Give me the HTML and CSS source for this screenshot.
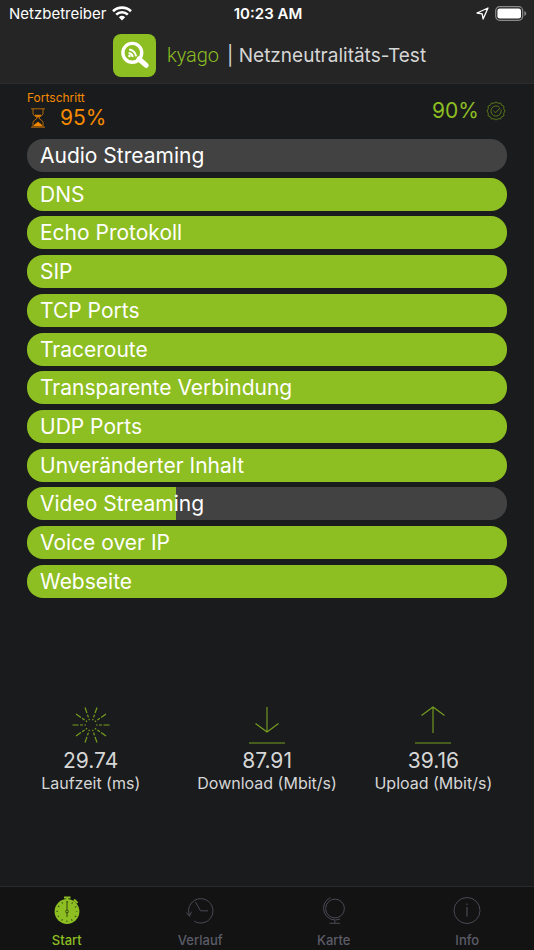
FILE: index.html
```html
<!DOCTYPE html>
<html lang="de">
  <head>
    <meta charset="UTF-8" />
    <meta name="viewport" content="width=device-width, initial-scale=1.0" />
    <title>kyago | Netzneutralitäts-Test</title>
    <link rel="stylesheet" href="styles.css">
  </head>
  <body>
    <header class="header">
      <div class="status-bar">
        <div class="carrier">
          <span>Netzbetreiber</span>
          <svg width="20" height="15" viewBox="0 0 20 15" fill="none" stroke="#fff" stroke-width="2.6">
            <path d="M1 5.2a13 13 0 0 1 18 0" />
            <path d="M4.2 8.6a8.4 8.4 0 0 1 11.6 0" />
            <path d="M10 14.6l-3.1-3.3a4.5 4.5 0 0 1 6.2 0z" fill="#fff" stroke="none" />
          </svg>
        </div>
        <div class="clock">10:23 AM</div>
        <div class="indicators">
          <svg width="13" height="13" viewBox="0 0 13 13" fill="none" stroke="#fff" stroke-width="1.3" stroke-linejoin="round">
            <path d="M12 1L1 6l5.2.8.9 5.2z" />
          </svg>
          <svg width="32" height="15" viewBox="0 0 32 15">
            <rect x=".7" y=".7" width="27" height="13.6" rx="4" fill="none" stroke="#8a8a8a" stroke-width="1.2" />
            <rect x="2.4" y="2.4" width="23.6" height="10.2" rx="2.4" fill="#fff" />
            <path d="M29.4 5v5q1.8-.8 1.8-2.5T29.4 5z" fill="#8a8a8a" />
          </svg>
        </div>
      </div>
      <div class="title-bar">
        <svg class="logo" width="43" height="43" viewBox="0 0 43 43">
          <rect width="43" height="43" rx="8" fill="#8dbe22" />
          <path d="M26 25l7.2 6.3" stroke="#fff" stroke-width="5" stroke-linecap="round" />
          <circle cx="19.3" cy="18.8" r="9.4" fill="none" stroke="#fff" stroke-width="3.4" />
          <g fill="none" stroke="#fff" stroke-width="2">
            <path d="M15.6 19a4.8 4.8 0 0 1 4.2 4" />
            <path d="M16.2 15.4a8 8 0 0 1 6.9 7" />
          </g>
          <circle cx="16.4" cy="22" r="1.3" fill="#fff" />
        </svg>
        <span class="brand">kyago</span>
        <h1 class="title">| Netzneutralitäts-Test</h1>
      </div>
    </header>

    <main class="content">
      <div class="summary">
        <div class="progress">
          <div class="progress-label">Fortschritt</div>
          <div class="progress-value">
            <svg width="16" height="20" viewBox="0 0 16 20" fill="none" stroke="#f58a00" stroke-width=".7">
              <path d="M1 .8h14M1 19.2h14" />
              <path d="M3 1v4.5c0 2.3 4 3 4 4.5s-4 2.2-4 4.5V19M13 1v4.5c0 2.3-4 3-4 4.5s4 2.2 4 4.5V19" />
              <path d="M5 7.2h6L8.5 9h-1z" fill="#f58a00" />
              <path d="M4 18q.5-2 2.3-2.6L8 14l1.7 1.4Q11.5 16 12 18z" fill="#f58a00" />
            </svg>
            <span>95%</span>
          </div>
        </div>
        <div class="score">
          <span>90%</span>
          <svg width="20" height="20" viewBox="0 0 20 20" fill="none" stroke="#587719">
            <path d="M10 1l2.1 1.3 2.4-.3 1.1 2.2 2.3 1-.2 2.4L19 10l-1.3 2.4.2 2.4-2.3 1-1.1 2.2-2.4-.3L10 19l-2.1-1.3-2.4.3-1.1-2.2-2.3-1 .2-2.4L1 10l1.3-2.4-.2-2.4 2.3-1L5.500 2l2.400.3z" />
            <path d="M13.400 6.200a5.100 5.100 0 1 0 1.500 2.300" />
            <path d="M7.500 9.800l2 2 4.500-4.800" />
          </svg>
        </div>
      </div>

      <ul class="tests">
        <li class="test">Audio Streaming</li>
        <li class="test done">DNS</li>
        <li class="test done">Echo Protokoll</li>
        <li class="test done">SIP</li>
        <li class="test done">TCP Ports</li>
        <li class="test done">Traceroute</li>
        <li class="test done">Transparente Verbindung</li>
        <li class="test done">UDP Ports</li>
        <li class="test done">Unveränderter Inhalt</li>
        <li class="test running" style="--progress: 31%">Video Streaming</li>
        <li class="test done">Voice over IP</li>
        <li class="test done">Webseite</li>
      </ul>

      <div class="results">
        <div class="result">
          <svg width="38" height="38" viewBox="0 0 38 38" stroke="#77a01f" stroke-width="1.2" stroke-dasharray="6 1.5 3 1.5 1.5 1.5">
            <path d="M.5 19h14M37.5 19h-14M4 8l11.5 8M34 8l-11.5 8M4 30l11.5-8M34 30l-11.5-8M13 1.500l4.500 13M25 1.500l-4.500 13M13 36.500l4.500-13M25 36.500l-4.500-13" />
          </svg>
          <div class="result-value">29.74</div>
          <div class="result-label">Laufzeit (ms)</div>
        </div>
        <div class="result">
          <svg width="38" height="38" viewBox="0 0 38 38" fill="none" stroke="#77a01f" stroke-width="1.1">
            <path d="M19 1v25M7.500 17.500L19 26l11.500-8.500M1 37h36" />
          </svg>
          <div class="result-value">87.91</div>
          <div class="result-label">Download (Mbit/s)</div>
        </div>
        <div class="result">
          <svg width="38" height="38" viewBox="0 0 38 38" fill="none" stroke="#77a01f" stroke-width="1.1">
            <path d="M19 27V1M7.500 9.500L19 1l11.500 8.500M1 37h36" />
          </svg>
          <div class="result-value">39.16</div>
          <div class="result-label">Upload (Mbit/s)</div>
        </div>
      </div>
    </main>

    <nav class="tab-bar">
      <a class="tab active" href="#start">
        <svg width="28" height="28" viewBox="0 0 28 28">
          <circle cx="14" cy="15.5" r="12.4" fill="#8dbe22" />
          <path d="M11 1.500h6.500M14.200 1.500v2M21 3.500l3.500 3.500" stroke="#8dbe22" stroke-width="2" />
          <circle cx="14" cy="15.5" r="9.8" fill="none" stroke="#34480f" stroke-width="1.6" stroke-dasharray="1 4.13" stroke-dashoffset=".5" />
          <path d="M14 5v16" stroke="#34480f" />
          <circle cx="14" cy="15.5" r="1.4" fill="#8dbe22" stroke="#34480f" />
        </svg>
        <span>Start</span>
      </a>
      <a class="tab" href="#verlauf">
        <svg width="28" height="28" viewBox="0 0 28 28" fill="none" stroke="#494a54">
          <path d="M8 25A12.200 12.200 0 1 0 3.300 19M.5 16.500l3 3.800 2-4.600M9.500 6l5 8.800h7.500" />
        </svg>
        <span>Verlauf</span>
      </a>
      <a class="tab" href="#karte">
        <svg width="28" height="28" viewBox="0 0 28 28" fill="none" stroke="#494a54">
          <circle cx="15" cy="12.5" r="9.4" />
          <path d="M10.500 1.500A11.700 11.700 0 1 0 20 23M14.800 24.200v3M9.500 27.300h10.500" />
        </svg>
        <span>Karte</span>
      </a>
      <a class="tab" href="#info">
        <svg width="28" height="28" viewBox="0 0 28 28" fill="none" stroke="#494a54">
          <circle cx="14" cy="14.5" r="13" />
          <path d="M14 11v9.500M14 7.500v1.500" stroke-width="1.2" />
        </svg>
        <span>Info</span>
      </a>
    </nav>
  </body>
</html>
```

FILE: styles.css
```css
* {
  box-sizing: border-box;
}

body {
  font-family: Inter, 'Helvetica Neue', sans-serif;
  margin: 0;
  background: #1a1b1d;
  color: #d6d6d6;
  min-height: 100vh;
  display: flex;
  flex-direction: column;
}

svg {
  display: block;
  flex-shrink: 0;
}

.header {
  background: #252525;
  border-bottom: 1px solid #2c2c2e;
}

.status-bar {
  display: grid;
  grid-template-columns: 1fr auto 1fr;
  align-items: center;
  height: 27px;
  padding: 0 7px 0 9px;
  color: #fff;
  font-size: 15px;
}

.carrier,
.indicators {
  display: flex;
  align-items: center;
  gap: 6px;
}

.indicators {
  justify-content: flex-end;
}

.clock {
  font-weight: 600;
}

.title-bar {
  display: flex;
  align-items: center;
  justify-content: center;
  height: 56px;
  padding-left: 5px;
}

.brand {
  margin: 0 8px 0 11px;
  color: #8dbe22;
  font-family: Roboto, sans-serif;
  font-size: 20px;
  font-weight: 300;
}

.title {
  margin: 0;
  font-size: 19px;
  font-weight: 400;
}

.content {
  flex-grow: 1;
  display: flex;
  flex-direction: column;
  padding-top: 7px;
}

.summary {
  display: flex;
  justify-content: space-between;
  padding: 0 28px 0 27px;
  font-size: 21px;
}

.progress {
  color: #f58a00;
}

.progress-label {
  font-size: 12px;
  line-height: 14px;
}

.progress-value,
.score {
  display: flex;
  align-items: center;
  line-height: 26px;
}

.progress-value {
  gap: 14px;
  padding-left: 3px;
}

.score {
  gap: 7px;
  color: #8dbe22;
}

/* the rows share out the height left between them */
.tests {
  display: flex;
  flex-direction: column;
  justify-content: space-between;
  min-height: 459px;
  margin: 8px 27px 0;
  padding: 0;
  list-style: none;
}

.test {
  padding: 1px 13px 0;
  border-radius: 16px;
  background: #424242;
  color: #fff;
  font-size: 21px;
  line-height: 32px;
}

.test.done {
  background: #8dbe22;
}

.test.running {
  background: linear-gradient(to right, #8dbe22 var(--progress), #424242 var(--progress));
}

.results {
  display: grid;
  grid-template-columns: 18fr 17fr 16fr;
  margin-top: auto;
  padding: 24px 20px 93px 0;
}

.result {
  display: flex;
  flex-direction: column;
  align-items: center;
}

.result-value {
  margin-top: 4px;
  font-size: 21px;
  line-height: 26px;
}

.result-label {
  font-size: 16px;
  line-height: 19px;
}

.tab-bar {
  display: flex;
  height: 64px;
  padding-top: 9px;
  background: #131313;
  border-top: 1px solid #2a2a2b;
}

.tab {
  flex: 1;
  display: flex;
  flex-direction: column;
  align-items: center;
  gap: 7px;
  color: #5b5c69;
  font-size: 13px;
  font-weight: 500;
  line-height: 18px;
  text-decoration: none;
}

.tab.active {
  color: #8dbe22;
}
```
